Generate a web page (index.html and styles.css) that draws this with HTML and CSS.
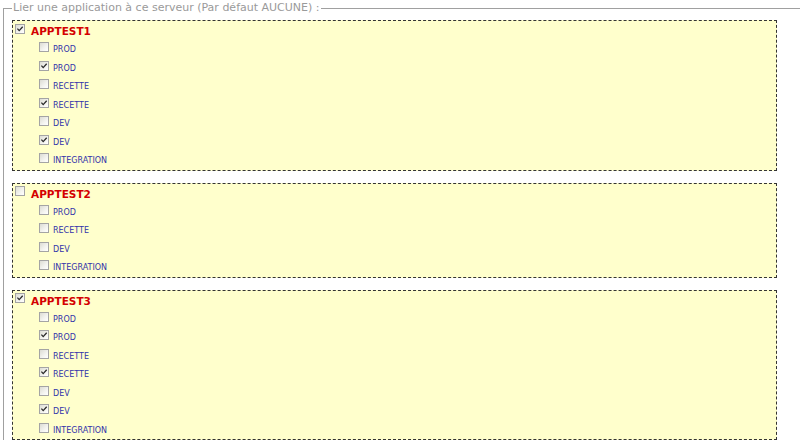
FILE: index.html
```html
<!DOCTYPE html>
<html lang="fr">
<head>
<meta charset="utf-8">
<title>Lier une application</title>
<link rel="stylesheet" href="styles.css">
</head>
<body>
<fieldset class="apps">
  <legend class="apps-legend">Lier une application à ce serveur (Par défaut AUCUNE) :</legend>

  <div class="app">
    <div class="row head"><span class="cb on"><svg viewBox="0 0 8 8"><path d="M1.4 3.6 L3.2 5.6 L6.7 1.8"/></svg></span><span class="app-name">APPTEST1</span></div>
    <div class="row sub"><span class="cb"></span><span class="env">PROD</span></div>
    <div class="row sub"><span class="cb on"><svg viewBox="0 0 8 8"><path d="M1.4 3.6 L3.2 5.6 L6.7 1.8"/></svg></span><span class="env">PROD</span></div>
    <div class="row sub"><span class="cb"></span><span class="env">RECETTE</span></div>
    <div class="row sub"><span class="cb on"><svg viewBox="0 0 8 8"><path d="M1.4 3.6 L3.2 5.6 L6.7 1.8"/></svg></span><span class="env">RECETTE</span></div>
    <div class="row sub"><span class="cb"></span><span class="env">DEV</span></div>
    <div class="row sub"><span class="cb on"><svg viewBox="0 0 8 8"><path d="M1.4 3.6 L3.2 5.6 L6.7 1.8"/></svg></span><span class="env">DEV</span></div>
    <div class="row sub"><span class="cb"></span><span class="env">INTEGRATION</span></div>
  </div>

  <div class="app">
    <div class="row head"><span class="cb"></span><span class="app-name">APPTEST2</span></div>
    <div class="row sub"><span class="cb"></span><span class="env">PROD</span></div>
    <div class="row sub"><span class="cb"></span><span class="env">RECETTE</span></div>
    <div class="row sub"><span class="cb"></span><span class="env">DEV</span></div>
    <div class="row sub"><span class="cb"></span><span class="env">INTEGRATION</span></div>
  </div>

  <div class="app">
    <div class="row head"><span class="cb on"><svg viewBox="0 0 8 8"><path d="M1.4 3.6 L3.2 5.6 L6.7 1.8"/></svg></span><span class="app-name">APPTEST3</span></div>
    <div class="row sub"><span class="cb"></span><span class="env">PROD</span></div>
    <div class="row sub"><span class="cb on"><svg viewBox="0 0 8 8"><path d="M1.4 3.6 L3.2 5.6 L6.7 1.8"/></svg></span><span class="env">PROD</span></div>
    <div class="row sub"><span class="cb"></span><span class="env">RECETTE</span></div>
    <div class="row sub"><span class="cb on"><svg viewBox="0 0 8 8"><path d="M1.4 3.6 L3.2 5.6 L6.7 1.8"/></svg></span><span class="env">RECETTE</span></div>
    <div class="row sub"><span class="cb"></span><span class="env">DEV</span></div>
    <div class="row sub"><span class="cb on"><svg viewBox="0 0 8 8"><path d="M1.4 3.6 L3.2 5.6 L6.7 1.8"/></svg></span><span class="env">DEV</span></div>
    <div class="row sub"><span class="cb"></span><span class="env">INTEGRATION</span></div>
  </div>
</fieldset>
</body>
</html>
```
FILE: styles.css
```css
html, body {
  margin: 0;
  padding: 0;
  background: #ffffff;
  overflow: hidden;
  font-family: Tahoma, "DejaVu Sans", sans-serif;
}

.apps {
  box-sizing: border-box;
  margin: 0 0 0 3px;
  padding: 4px 0 0 8px;
  width: calc(100% - 3px);
  border: 1px solid #a0a0a0;
  border-right: 0;
  border-bottom: 0;
  min-width: 0;
}

.apps-legend {
  padding: 0 1px;
  font-size: 11px;
  line-height: 16px;
  color: #9a9a9a;
}

.app {
  box-sizing: border-box;
  width: 765px;
  border: 1px dashed #333333;
  background: #ffffcc;
  margin-bottom: 12px;
}

.app:last-child {
  margin-bottom: 0;
}

.row {
  display: flex;
  align-items: flex-start;
}

.head {
  height: 19px;
}

.sub {
  height: 18.5px;
}

.cb {
  box-sizing: border-box;
  flex: none;
  width: 10px;
  height: 10px;
  border: 1px solid #a4a4a4;
  background: linear-gradient(135deg, #dcdcd4 0%, #f4f4f0 60%, #ffffff 100%);
  display: flex;
}

.cb svg {
  width: 8px;
  height: 8px;
}

.cb svg path {
  fill: none;
  stroke: #2a2a2a;
  stroke-width: 1.3;
}

.head .cb {
  margin: 2.5px 0 0 2px;
}

.sub .cb {
  margin: 2px 0 0 26px;
}

.app-name {
  margin: 4px 0 0 6px;
  font-size: 10.5px;
  line-height: 12px;
  font-weight: bold;
  color: #d40000;
}

.env {
  margin: 5px 0 0 4px;
  font-size: 8px;
  line-height: 10px;
  color: #3333aa;
}
```
